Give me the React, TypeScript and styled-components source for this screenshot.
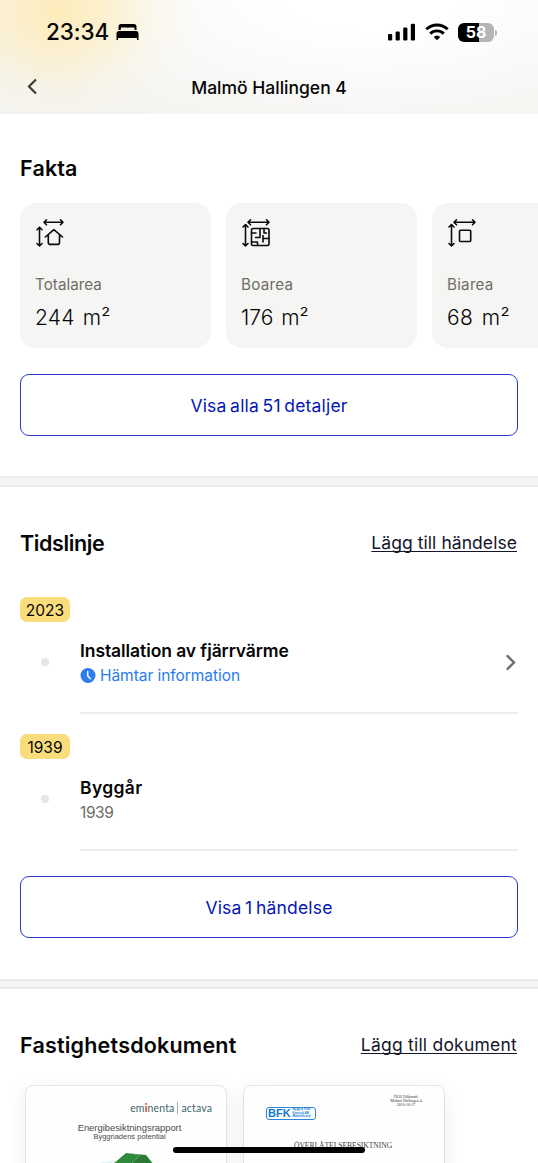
import React from 'react';
import styled, { createGlobalStyle } from 'styled-components';

const GlobalStyle = createGlobalStyle`
  *, *::before, *::after { box-sizing: border-box; }
  html, body { margin: 0; padding: 0; background: #fff; }
  body { font-family: Inter, "Liberation Sans", sans-serif; color: #060606; }
  button { font-family: inherit; background: none; border: 0; padding: 0; margin: 0; }
  svg { display: block; flex: none; }
`;

const Screen = styled.div`
  position: relative;
  width: 538px;
  height: 1163px;
  overflow: hidden;
  background: #fff;
`;

const Header = styled.header`
  height: 114px;
  background:
    radial-gradient(ellipse 140px 118px at 58px 10px, rgba(255, 234, 176, 0.85) 0%, rgba(254, 237, 190, 0.66) 35%, rgba(250, 243, 218, 0.32) 70%, rgba(248, 246, 238, 0) 100%),
    radial-gradient(ellipse 380px 160px at 370px -10px, #ffffff 25%, rgba(255, 255, 255, 0) 100%),
    #f4f3f0;
`;

const StatusBar = styled.div`
  height: 62px;
  padding: 2px 44px 0 46px;
  display: flex;
  align-items: center;
  justify-content: space-between;
`;

const StatusGroup = styled.div<{ $gap: number }>`
  display: flex;
  align-items: center;
  gap: ${p => p.$gap}px;
`;

const Clock = styled.span`
  font-size: 22.5px;
  line-height: 28px;
  font-weight: 450;
  letter-spacing: -0.1px;
`;

const Battery = styled.span`
  position: relative;
  width: 36px;
  height: 19px;
  border-radius: 6px;
  background: linear-gradient(90deg, #000 57%, #b5b5b5 57%);
  color: #fff;
  font-size: 16px;
  line-height: 19px;
  font-weight: 700;
  text-align: center;
  &::after {
    content: "";
    position: absolute;
    left: 37px;
    top: 7px;
    width: 2px;
    height: 6px;
    border-radius: 0 2px 2px 0;
    background: #b5b5b5;
  }
`;

const NavBar = styled.nav`
  height: 52px;
  padding: 0 26px;
  display: grid;
  grid-template-columns: 24px 1fr 24px;
  align-items: center;
`;

const BackSlot = styled.span`
  padding-bottom: 3px;
`;

const NavTitle = styled.h1`
  margin: 0;
  text-align: center;
  font-size: 17.5px;
  line-height: 24px;
  font-weight: 500;
`;

const Section = styled.section<{ $top?: number }>`
  padding: ${p => p.$top ?? 41}px 20px 0;
`;

const SectionHead = styled.div<{ $height?: number }>`
  display: flex;
  align-items: center;
  justify-content: space-between;
  height: ${p => p.$height ?? 30}px;
`;

const Heading = styled.h2<{ $track?: number }>`
  margin: 0;
  font-size: 21.5px;
  line-height: 30px;
  font-weight: 600;
  letter-spacing: ${p => p.$track ?? 0}px;
`;

const TextLink = styled.a<{ $track?: number }>`
  font-size: 17.5px;
  line-height: 26px;
  color: #14142b;
  letter-spacing: ${p => p.$track ?? 0}px;
  text-decoration: underline;
  text-decoration-thickness: 1px;
  text-underline-offset: 2px;
  text-decoration-skip-ink: none;
  margin-right: 1px;
`;

const FactRow = styled.div`
  display: flex;
  gap: 15px;
  margin: 21px -20px 0 0;
  overflow: hidden;
`;

const FactCard = styled.article`
  flex: 0 0 191px;
  height: 145px;
  border-radius: 16px;
  background: #f5f5f3;
  padding: 15px 15px 0;
`;

const FactLabel = styled.div<{ $track: number }>`
  margin: 26px 0 0;
  font-size: 15.2px;
  line-height: 22px;
  color: #6d6d66;
  letter-spacing: ${p => p.$track}px;
`;

const FactValue = styled.div<{ $track: number; $space: number }>`
  margin-top: 8px;
  font-size: 21px;
  line-height: 28px;
  font-weight: 300;
  letter-spacing: ${p => p.$track}px;
  word-spacing: ${p => p.$space}px;
`;

const OutlineButton = styled.button<{ $top: number }>`
  display: block;
  width: 100%;
  height: 62px;
  margin-top: ${p => p.$top}px;
  padding-top: 1px;
  border: 1px solid #2b3bc9;
  border-radius: 9px;
  color: #0416b4;
  font-size: 17.5px;
  letter-spacing: 0.18px;
  word-spacing: -1.5px;
`;

const Band = styled.div<{ $top: number; $height: number }>`
  margin-top: ${p => p.$top}px;
  height: ${p => p.$height}px;
  background: #f4f4f2;
  border-top: 1px solid #efefee;
  border-bottom: 1px solid #efefee;
  box-shadow: inset 0 1px #e8e8e7, inset 0 -1px #e8e8e7;
`;

const Timeline = styled.div`
  margin-top: 39px;
  display: flex;
  flex-direction: column;
  gap: 20px;
`;

const YearBadge = styled.div`
  width: 50px;
  height: 25px;
  border-radius: 7px;
  background: #f9dc7c;
  font-size: 15.5px;
  line-height: 27px;
  text-align: center;
`;

const Event = styled.div`
  display: grid;
  grid-template-columns: 60px 1fr;
  height: 92px;
`;

const Dot = styled.span`
  width: 8px;
  height: 8px;
  margin: 36px 0 0 21px;
  border-radius: 50%;
  background: #e6e6e2;
`;

const EventBody = styled.div`
  display: flex;
  align-items: flex-start;
  justify-content: space-between;
  padding-top: 16px;
  border-bottom: 2px solid #eeeeee;
`;

const EventTitle = styled.div<{ $track?: number }>`
  font-size: 17.5px;
  line-height: 26px;
  font-weight: 600;
  letter-spacing: ${p => p.$track ?? 0}px;
`;

const EventMeta = styled.div<{ $info?: boolean }>`
  display: flex;
  align-items: center;
  gap: 4px;
  font-size: 15.5px;
  line-height: 24px;
  letter-spacing: ${p => (p.$info ? -0.05 : -0.4)}px;
  color: ${p => (p.$info ? '#2a7bf0' : '#6d6d66')};
`;

const ChevronSlot = styled.span`
  margin: 16px 1px 0 0;
`;

const DocRow = styled.div`
  display: flex;
  gap: 16px;
  margin: 25px 0 0 5px;
`;

const DocPage = styled.article`
  flex: 0 0 202px;
  height: 260px;
  border: 1px solid #e4e4e0;
  border-radius: 8px;
  background: #fefefe;
  box-shadow: 0 6px 22px rgba(0, 0, 0, 0.07);
`;

const BrandLine = styled.div`
  display: flex;
  justify-content: flex-end;
  align-items: center;
  margin: 15px 14px 0 0;
  font-family: Lato, sans-serif;
  font-size: 10.5px;
  line-height: 14px;
  letter-spacing: 0.15px;
  color: #3f6468;
  b { color: #d2443e; font-weight: 900; }
`;

const BrandRule = styled.i`
  width: 1px;
  height: 12px;
  margin: 0 3px;
  background: #9fb4b6;
`;

const ReportTitle = styled.div`
  margin: 7px 0 0 51px;
  width: 105px;
  text-align: center;
  white-space: nowrap;
  font-family: "Liberation Sans", sans-serif;
  font-size: 9.4px;
  line-height: 11px;
  color: #484c4b;
  small { display: block; font-size: 7.5px; line-height: 8px; }
`;

const ReportArt = styled.div`
  margin: 12px 0 0 70px;
`;

const LetterMeta = styled.div`
  margin: 9px 19px 0 0;
  font-family: "Liberation Serif", serif;
  font-size: 4px;
  line-height: 4px;
  color: #333;
  div { width: 38px; margin-left: auto; text-align: center; white-space: nowrap; }
`;

const BfkLogo = styled.div`
  width: 50px;
  height: 13px;
  margin: 0 0 0 22px;
  padding: 0 1px;
  display: flex;
  align-items: center;
  gap: 2px;
  border: 1px solid #2b86d8;
  border-radius: 3px;
  color: #1479d8;
  font-family: "Liberation Sans", sans-serif;
  font-weight: 700;
  font-size: 11px;
  line-height: 11px;
  small { font-size: 3px; line-height: 3.4px; white-space: nowrap; }
`;

const LetterTitle = styled.div`
  margin: 21px 0 0 50px;
  font-family: "Liberation Serif", serif;
  font-size: 7.6px;
  line-height: 10px;
  letter-spacing: -0.05px;
  color: #444;
  white-space: nowrap;
`;

const HomeIndicator = styled.div`
  position: absolute;
  left: 173px;
  top: 1147px;
  width: 192px;
  height: 6px;
  border-radius: 3px;
  background: #000;
`;

const BedIcon = () => (
  <svg width="24" height="18" viewBox="0 0 24 18">
    <path d="M2.5 7V3.5C2.5 2 3.5 1 5 1h13c1.5 0 2.5 1 2.5 2.5V7h-2V5.500c0-.6-.4-1-1-1H13c-.6 0-1 .4-1 1 0-.6-.4-1-1-1H5.800c-.6 0-1 .4-1 1V7z" />
    <path d="M.5 10.500C.5 8.900 1.500 8 3 8h17c1.500 0 2.500.9 2.500 2.500V17h-1.500v-2H2v2H.5z" />
  </svg>
);

const SignalIcon = () => (
  <svg width="28" height="18" viewBox="0 0 28 18">
    <rect x="0" y="11" width="4.200" height="6.500" rx="1.200" />
    <rect x="7.600" y="8.500" width="4.200" height="9" rx="1.200" />
    <rect x="15.200" y="4.500" width="4.200" height="13" rx="1.200" />
    <rect x="22.800" y="0.800" width="4.200" height="16.700" rx="1.200" />
  </svg>
);

const WifiIcon = () => (
  <svg width="24" height="18" viewBox="0 0 24 18" fill="none" stroke="#000" strokeWidth="2.900">
    <path d="M1.300 6.300a15.300 15.300 0 0 1 21.400 0" />
    <path d="M5.200 10.600a9.800 9.800 0 0 1 13.600 0" />
    <path d="M12 17.300 8.700 14a4.800 4.800 0 0 1 6.600 0z" fill="#000" stroke="none" />
  </svg>
);

const BackIcon = () => (
  <svg width="12" height="17" viewBox="0 0 12 17" fill="none" stroke="#3d3d3d" strokeWidth="2.200">
    <path d="M10 1.500 3 8.500l7 7" />
  </svg>
);

const ForwardIcon = () => (
  <svg width="12" height="17" viewBox="0 0 12 17" fill="none" stroke="#6b6b66" strokeWidth="2.400" strokeLinecap="round">
    <path d="M2.500 2 9 8.500 2.500 15" />
  </svg>
);

const ClockIcon = () => (
  <svg width="16" height="16" viewBox="0 0 16 16">
    <circle cx="8" cy="7.500" r="7.500" fill="#2f7bf2" />
    <path d="M7.700 3.500v4.300l2.600 3" fill="none" stroke="#fff" strokeWidth="1.500" strokeLinecap="round" />
  </svg>
);

type AreaKind = 'house' | 'plan' | 'square';

const AreaIcon = ({ kind }: { kind: AreaKind }) => {
  const left = kind === 'house' ? 8.5 : 6.5;
  const top = kind === 'house' ? 9.2 : 6.5;
  return (
    <svg width="30" height="30" viewBox="-0.5 0 30 30" fill="none" stroke="#0b0b0b" strokeWidth="1.600" strokeLinecap="round" strokeLinejoin="round">
      <path d={`M${left} 4.300H27.500M${left + 2.5} 1.800 ${left} 4.300l2.500 2.500M25 1.800l2.500 2.500L25 6.800`} />
      <path d={`M4 ${top}V28M1.500 ${top + 2.5} 4 ${top}l2.500 2.500M1.500 25.500 4 28l2.500-2.500`} />
      {kind === 'house' && <path d="M9.800 19l8.600-7.400L27 19M12.800 17v7.400q0 2 2 2h7.200q2 0 2-2V17" />}
      {kind === 'square' && <rect x="12" y="12.300" width="11.200" height="11.200" rx="1" />}
      {kind === 'plan' && (
        <>
          <rect x="10" y="10.500" width="17.500" height="17" rx="1.500" />
          <path d="M10 15h4.500M18.500 10.500v9h-4.500M22.500 10.500V15H25M27.500 20.500h-6M21.500 17.500v6.500M10 24h6v3.500" />
        </>
      )}
    </svg>
  );
};

const facts: { kind: AreaKind; label: string; value: string; labelTrack: number; track: number; space: number }[] = [
  { kind: 'house', label: 'Totalarea', value: '244 m²', labelTrack: 0.05, track: 0.2, space: 2 },
  { kind: 'plan', label: 'Boarea', value: '176 m²', labelTrack: 0.25, track: 0, space: 2 },
  { kind: 'square', label: 'Biarea', value: '68 m²', labelTrack: 0.25, track: 0.3, space: 2.5 },
];

export default function App() {
  return (
    <Screen>
      <GlobalStyle />
      <Header>
        <StatusBar>
          <StatusGroup $gap={7}>
            <Clock>23:34</Clock>
            <BedIcon />
          </StatusGroup>
          <StatusGroup $gap={9}>
            <SignalIcon />
            <WifiIcon />
            <Battery>58</Battery>
          </StatusGroup>
        </StatusBar>
        <NavBar>
          <BackSlot>
            <BackIcon />
          </BackSlot>
          <NavTitle>Malmö Hallingen 4</NavTitle>
        </NavBar>
      </Header>

      <Section $top={40}>
        <SectionHead $height={28}>
          <Heading $track={0.15}>Fakta</Heading>
        </SectionHead>
        <FactRow>
          {facts.map(f => (
            <FactCard key={f.label}>
              <AreaIcon kind={f.kind} />
              <FactLabel $track={f.labelTrack}>{f.label}</FactLabel>
              <FactValue $track={f.track} $space={f.space}>{f.value}</FactValue>
            </FactCard>
          ))}
        </FactRow>
        <OutlineButton $top={26}>Visa alla 51 detaljer</OutlineButton>
      </Section>
      <Band $top={40} $height={11} />

      <Section>
        <SectionHead>
          <Heading $track={-0.4}>Tidslinje</Heading>
          <TextLink $track={0.06}>Lägg till händelse</TextLink>
        </SectionHead>
        <Timeline>
          <div>
            <YearBadge>2023</YearBadge>
            <Event>
              <Dot />
              <EventBody>
                <div>
                  <EventTitle $track={-0.08}>Installation av fjärrvärme</EventTitle>
                  <EventMeta $info>
                    <ClockIcon />
                    Hämtar information
                  </EventMeta>
                </div>
                <ChevronSlot>
                  <ForwardIcon />
                </ChevronSlot>
              </EventBody>
            </Event>
          </div>
          <div>
            <YearBadge>1939</YearBadge>
            <Event>
              <Dot />
              <EventBody>
                <div>
                  <EventTitle $track={0.35}>Byggår</EventTitle>
                  <EventMeta>1939</EventMeta>
                </div>
              </EventBody>
            </Event>
          </div>
        </Timeline>
        <OutlineButton $top={25}>Visa 1 händelse</OutlineButton>
      </Section>
      <Band $top={41} $height={10} />

      <Section>
        <SectionHead>
          <Heading $track={0.2}>Fastighetsdokument</Heading>
          <TextLink $track={0.22}>Lägg till dokument</TextLink>
        </SectionHead>
        <DocRow>
          <DocPage>
            <BrandLine>
              <span>em<b>i</b>nenta</span>
              <BrandRule />
              <span>actava</span>
            </BrandLine>
            <ReportTitle>
              Energibesiktningsrapport
              <small>Byggnadens potential</small>
            </ReportTitle>
            <ReportArt>
              <svg width="80" height="40" viewBox="0 0 80 40">
                <path d="M2 10 20 7l-6 12H0z" fill="#e2f5f5" />
                <path d="M30 0 44 2 32 14 16 12z" fill="#2f8a3c" />
                <path d="M16 12 32 14 28 30H12z" fill="#4fb054" />
                <path d="M30 0 50 2 58 12 46 30 32 14 44 2z" fill="#2b7a35" />
              </svg>
            </ReportArt>
          </DocPage>
          <DocPage>
            <LetterMeta>
              <div>ÖLB Utlåtande</div>
              <div>Malmö Hallingen 4</div>
              <div>2016-10-17</div>
            </LetterMeta>
            <BfkLogo>
              BFK
              <small>Bygg &amp; Fukt<br />Konsult AB<br />Malmö/Lund</small>
            </BfkLogo>
            <LetterTitle>ÖVERLÅTELSEBESIKTNING</LetterTitle>
          </DocPage>
        </DocRow>
      </Section>
      <HomeIndicator />
    </Screen>
  );
}
